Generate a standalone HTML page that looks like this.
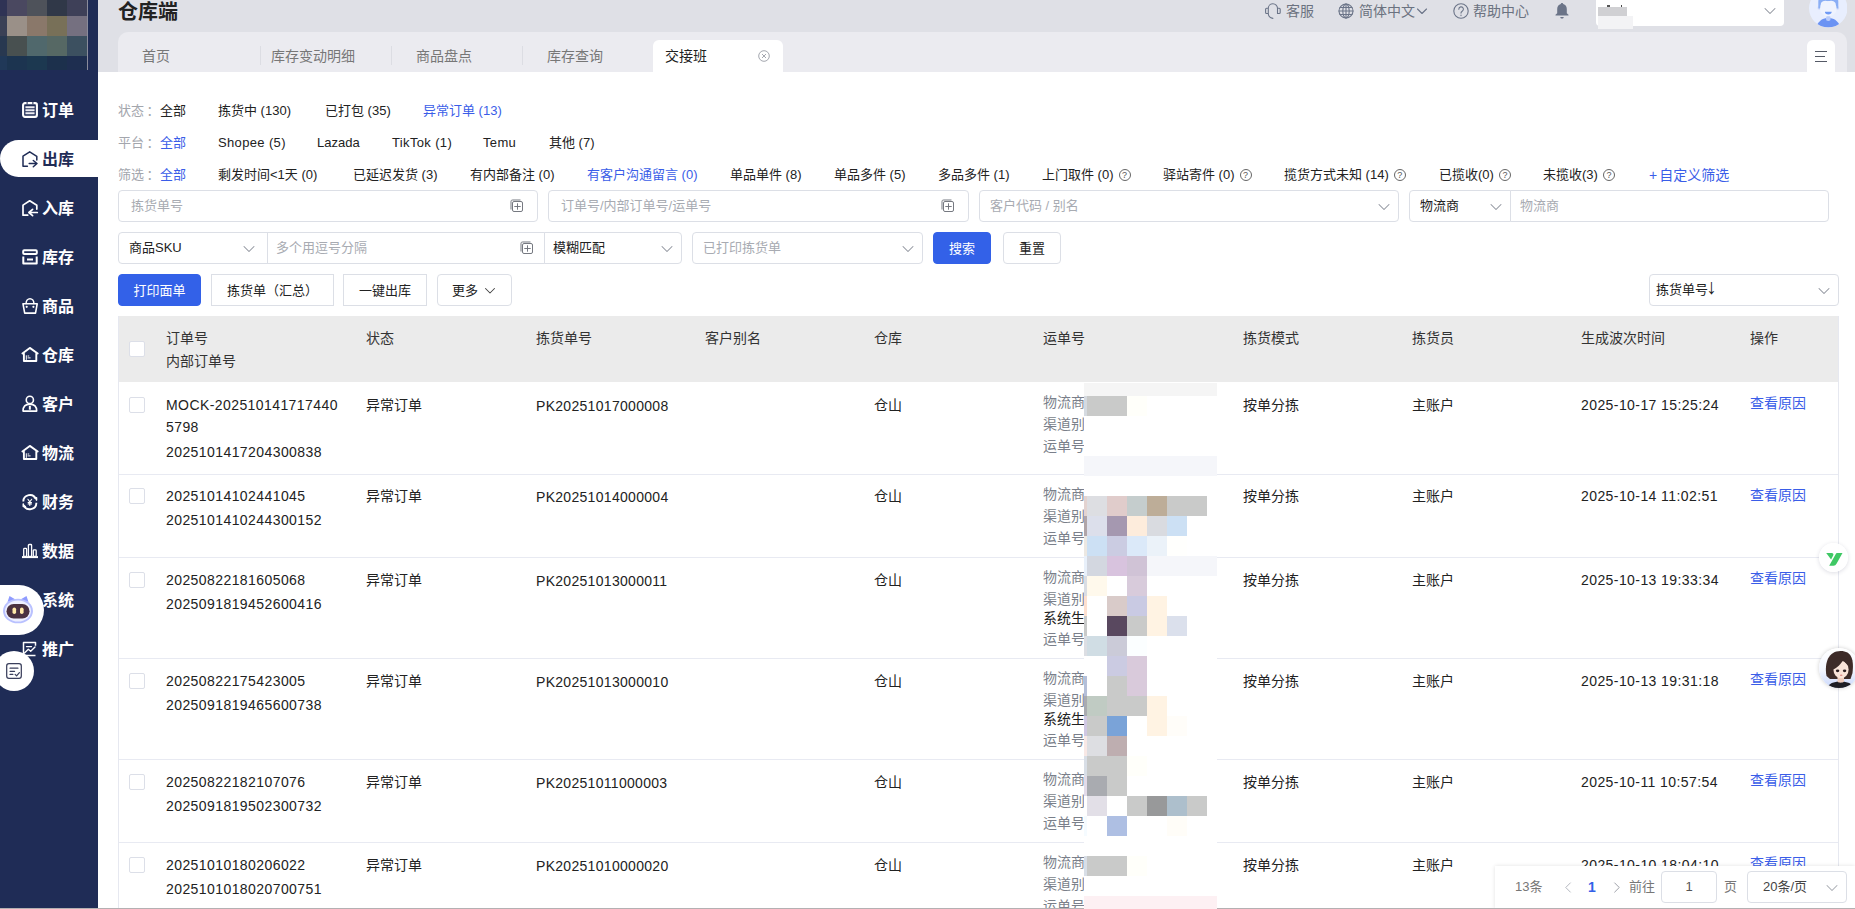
<!DOCTYPE html>
<html lang="zh-CN">
<head>
<meta charset="utf-8">
<title>仓库端 - 交接班</title>
<style>
*{box-sizing:border-box;margin:0;padding:0}
html,body{width:1855px;height:909px;overflow:hidden;background:#fff}
body{font-family:"Liberation Sans","Noto Sans CJK SC",sans-serif;font-size:14px;color:#222;position:relative}
i{font-style:normal;display:block;position:absolute}
/* sidebar */
#side{position:absolute;left:0;top:0;width:98px;height:908px;background:#1f2c56}
#logo{position:absolute;left:0;top:0;width:88px;height:70px;overflow:hidden;border-right:1px solid #8a8c9c}
#logo i{width:20px;height:20px}
.nav{position:absolute;left:0;width:98px;height:37px;color:#fff;font-weight:bold;font-size:16px;line-height:37px}
.nav svg{position:absolute;left:21.7px;top:10.8px;width:16px;height:16px;overflow:visible;fill:none;stroke:#fff;stroke-width:1.7;stroke-linecap:round;stroke-linejoin:round}
.nav span{position:absolute;left:42px;top:1px;white-space:nowrap}
.nav.on{background:#fff;color:#1f2c56;border-radius:19px 0 0 19px}
.nav.on svg{stroke:#1f2c56;stroke-width:1.5}
#bot{position:absolute;left:0;top:585px;width:44px;height:50px;background:#fff;border-radius:0 25px 25px 0}
#note{position:absolute;left:-6px;top:651px;width:40px;height:40px;background:#fff;border-radius:50%}
/* header */
#head{position:absolute;left:98px;top:0;width:1757px;height:72px;background:#dfe0e6}
#title{position:absolute;left:20px;top:-3px;font-size:20px;font-weight:bold;color:#222;line-height:30px;white-space:nowrap}
.hitem{position:absolute;top:0;height:24px;line-height:23px;color:#6b7280;font-size:14px;white-space:nowrap}
svg.hic{position:absolute;width:16px;height:16px;fill:none;stroke:#6b7488;stroke-width:1.1;stroke-linecap:round;stroke-linejoin:round}
#acct{position:absolute;left:1498px;top:-4px;width:188px;height:30px;background:#fff;border-radius:4px}
#tabs{position:absolute;left:20px;top:32px;width:1729px;height:40px;background:#ebebf0;border-radius:10px 10px 0 0}
.tab{position:absolute;top:14px;height:20px;line-height:20px;color:#777;font-size:14px;white-space:nowrap}
.sep{position:absolute;top:14px;width:1px;height:19px;background:#dcdde3}
#tabon{position:absolute;left:535px;top:8px;width:130px;height:32px;background:#fff;border-radius:6px 6px 0 0}
#menu{position:absolute;left:1689px;top:8px;width:28px;height:32px;background:#fff;border-radius:6px 6px 0 0}
/* filters */
.frow{position:absolute;left:118px;height:20px;line-height:20px;font-size:13px;white-space:nowrap}
.frow span{position:absolute;top:0;white-space:nowrap}
.lbl{color:#a3a6ad}
.ls{letter-spacing:.35px}
.blue{color:#3a5de8}
.q{display:inline-block;width:12px;height:12px;border:1px solid #666;border-radius:50%;font-size:9px;line-height:10px;text-align:center;vertical-align:1px;margin-left:5px;color:#555;font-weight:normal}
/* inputs */
.inp{position:absolute;height:32px;border:1px solid #dcdfe6;border-radius:4px;background:#fff;font-size:13px;line-height:30px;color:#a8abb2;white-space:nowrap}
.inp .t{position:absolute;left:12px;top:0}
.inp .dark{color:#222}
.btn{position:absolute;height:32px;border:1px solid #dcdfe6;border-radius:4px;background:#fff;font-size:13px;line-height:32px;color:#222;text-align:center;white-space:nowrap}
.btn.pri{background:#3361e8;border-color:#3361e8;color:#fff}
svg.chev{position:absolute;width:12px;height:12px;fill:none;stroke:#8f939d;stroke-width:1.05;stroke-linecap:round;stroke-linejoin:round}
svg.plus{position:absolute;width:14px;height:14px;fill:none;stroke:#6f727a;stroke-width:.95}
/* table */
#tbl{position:absolute;left:118px;top:316px;width:1721px;height:593px;overflow:hidden}
#tbl:before{content:'';position:absolute;left:0;top:0;z-index:2;width:1px;height:593px;background:#e6e8f0}
#tbl:after{content:'';position:absolute;left:1720px;top:0;width:1px;height:593px;background:#e6e8f0}
#th{position:absolute;left:0;top:0;width:1720px;height:66px;background:#ebebeb;color:#333}
.tr{position:absolute;left:0;width:1720px;border-bottom:1px solid #e8eaf2}
.c{position:absolute;white-space:nowrap;line-height:20px;height:20px;font-size:14px}
.c.n{letter-spacing:.42px}
.c.g{color:#7a7f8a}
.cb{width:16px;height:16px;border:1px solid #dcdfe8;border-radius:2px;background:#fff}
#mos{position:absolute;left:0;top:0;z-index:3}
#mos i{}
#yq{position:absolute;left:1818.5px;top:543.3px;width:29px;height:29px;border-radius:50%;background:rgba(255,255,255,.93);box-shadow:0 1px 4px rgba(40,40,80,.16)}
#girl{position:absolute;left:1819px;top:647.5px;width:40px;height:40px;border-radius:50%;box-shadow:0 0 4px rgba(0,0,0,.2)}
#pg{position:absolute;left:1495px;top:866px;width:360px;height:43px;background:#fff;box-shadow:0 0 4px rgba(0,0,0,.12)}
#pg .pt{position:absolute;top:11px;line-height:20px;white-space:nowrap}
#bl{position:absolute;left:0;top:908px;width:1855px;height:1px;background:#b4b0b2;z-index:2}
</style>
</head>
<body>
<div id="side"><div id="logo"><i style="left:-13px;top:-4px;background:#2f3355"></i><i style="left:7px;top:-4px;background:#4a4860"></i><i style="left:27px;top:-4px;background:#4e525a"></i><i style="left:47px;top:-4px;background:#303848"></i><i style="left:67px;top:-4px;background:#3e4058"></i><i style="left:-13px;top:16px;background:#3a4055"></i><i style="left:7px;top:16px;background:#9a9088"></i><i style="left:27px;top:16px;background:#8a786a"></i><i style="left:47px;top:16px;background:#787058"></i><i style="left:67px;top:16px;background:#757080"></i><i style="left:-13px;top:36px;background:#283850"></i><i style="left:7px;top:36px;background:#485050"></i><i style="left:27px;top:36px;background:#50686c"></i><i style="left:47px;top:36px;background:#566864"></i><i style="left:67px;top:36px;background:#3c5060"></i><i style="left:-13px;top:56px;background:#203858"></i><i style="left:7px;top:56px;background:#1c3450"></i><i style="left:27px;top:56px;background:#1c3850"></i><i style="left:47px;top:56px;background:#1c304c"></i><i style="left:67px;top:56px;background:#1e2e50"></i></div>
<div class="nav" style="top:91.0px"><svg viewBox="0 0 16 16"><rect x="1.1" y="1.1" width="13.8" height="13.8" rx="1.8" stroke-width="2.1"/><path d="M3.4 5.3h9.200M3.4 8.3h9.200M3.4 11.3h9.2" stroke-width="1.9" stroke-linecap="butt" stroke="#ececf2"/><path d="M5.1 0v2.300M10.9 0v2.3" stroke="#1f2c56" stroke-width="1" stroke-linecap="butt"/></svg><span>订单</span></div>
<div class="nav on" style="top:140.0px"><svg viewBox="0 0 16 16"><path d="M5.4 15.2H1V5.1L7.7.8l7.1 4.500v3.8"/><path d="M7.2 12.500h7.600M11.3 9.500l3.7 3-3.7 3.2"/></svg><span>出库</span></div>
<div class="nav" style="top:189.0px"><svg viewBox="0 0 16 16"><path d="M5.7 15.200H1V5.100L7.7.8l7.1 4.500v3.8"/><path d="M15.3 12.500H7.400M10.6 9.300l-3.7 3.2 3.7 3.2"/></svg><span>入库</span></div>
<div class="nav" style="top:238.0px"><svg viewBox="0 0 16 16"><rect x="1.2" y="1.3" width="13.6" height="3.7" rx="1" stroke-width="2"/><path d="M1.3 7.600v7h13.400v-7" stroke-width="2" stroke-linecap="butt"/><path d="M5 10.500h6" stroke-width="2" stroke-linecap="butt"/></svg><span>库存</span></div>
<div class="nav" style="top:287.0px"><svg viewBox="0 0 16 16"><path d="M1 5.800h14.200l-1.7 9.300H2.700z" stroke-width="1.6"/><path d="M4.1 5.500a3.8 4.7 0 0 1 7.8 0" stroke-width="1.5"/><circle cx="4.7" cy="8.8" r="1.1" fill="#fff" stroke="none"/><circle cx="11.4" cy="8.8" r="1.1" fill="#fff" stroke="none"/></svg><span>商品</span></div>
<div class="nav" style="top:336.0px"><svg viewBox="0 0 16 16"><path d="M.4 6.400L7.8.9l7.9 5.6" stroke-width="1.9"/><path d="M1.9 6.800v7.200h12.400V6.8" stroke-width="1.9"/><path d="M4.3 8.700v3.800M6 9h.8M6 10.900h2.2" stroke-width="1"/></svg><span>仓库</span></div>
<div class="nav" style="top:385.0px"><svg viewBox="0 0 16 16"><circle cx="7.850" cy="3.9" r="3.6" stroke-width="1.6"/><path d="M1 15.100c0-4.8 2.8-7 6.850-7s6.850 2.2 6.850 7z" stroke-width="1.6"/><path d="M7.850 9.700v4" stroke-width="2" stroke-linecap="butt"/></svg><span>客户</span></div>
<div class="nav" style="top:434.0px"><svg viewBox="0 0 16 16"><path d="M.4 6.400L7.8.9l7.9 5.6" stroke-width="1.9"/><path d="M1.9 6.800v7.200h12.400V6.8" stroke-width="1.9"/><path d="M4.3 8.700v3.800M6 9h.8M6 10.900h2.2" stroke-width="1"/></svg><span>物流</span></div>
<div class="nav" style="top:483.0px"><svg viewBox="0 0 16 16"><path d="M1.3 7.500A6.6 6.6 0 0 1 14 5.100M14.4 8.700A6.6 6.6 0 0 1 1.7 11.1" stroke-width="1.9" stroke-linecap="butt"/><path d="M12.4 3.700h2.100v2.400M3.4 12.500H1.300v-2.4" stroke-width="1.6"/><path d="M5.9 5.300l1.9 2.6 1.9-2.600M7.8 7.900v3.600M6.1 8.600h3.400M6.1 10h3.4" stroke-width="1.1"/></svg><span>财务</span></div>
<div class="nav" style="top:532.0px"><svg viewBox="0 0 16 16"><path d="M0 14.100h16" stroke-width="2" stroke-linecap="butt"/><rect x="1.7" y="5.4" width="2.9" height="8" rx=".8" stroke-width="1.3"/><rect x="6.4" y="1.5" width="3.2" height="12" rx=".8" stroke-width="1.3"/><rect x="11.3" y="6.9" width="2.9" height="6.5" rx=".8" stroke-width="1.3"/></svg><span>数据</span></div>
<div class="nav" style="top:581.0px"><svg viewBox="0 0 16 16"><circle cx="8" cy="8" r="2.4"/></svg><span>系统</span></div>
<div class="nav" style="top:630.0px"><svg viewBox="0 0 16 16"><path d="M13.5 14.600H1.500V1.500h12v3.3" stroke-width="1.5" stroke-linecap="butt"/><path d="M4.5 5.600h5M2.5 12l3.8-3.8 2.4 2 4.3-4.2" stroke-width="1.4"/></svg><span>推广</span></div>
</div>
<div id="bot"><svg viewBox="0 0 32 30" width="32" height="30" style="position:absolute;left:2px;top:10px">
<path d="M5.5 7l2-6 6 3.500zM26.5 7l-2-6-6 3.500z" fill="#8f9bff"/><ellipse cx="16" cy="16" rx="15" ry="12.3" fill="#b9c1ff"/><ellipse cx="16" cy="16" rx="13" ry="10.5" fill="#eef0ff"/>
<rect x="4.5" y="9" width="23" height="14.5" rx="7.2" fill="#4a3140"/><rect x="10.5" y="12.5" width="3.6" height="6.5" rx="1.8" fill="#ffe9a8"/><rect x="18" y="12.5" width="3.6" height="6.5" rx="1.8" fill="#ffe9a8"/></svg></div>
<div id="note"><svg viewBox="0 0 16 16" width="18" height="18" style="position:absolute;left:11px;top:11px;fill:none;stroke:#3a3f5c;stroke-width:1.1;stroke-linecap:round;stroke-linejoin:round"><rect x="1.5" y="1.5" width="13" height="13" rx="2"/><path d="M4.5 5.500h7M4.5 8.300h4M4.5 11h2.500M9 11l1.3 1.3 2.5-2.8"/></svg></div>
<div id="head"><div id="title">仓库端</div>
<svg class="hic" style="left:1167px;top:3px" viewBox="0 0 16 16"><path d="M3.3 10.500V5.300a4.6 4.6 0 0 1 9.2 0v5.200M3.3 5.200H1.600a1 1 0 0 0-1 1v3.300a1 1 0 0 0 1 1h1.700M12.5 5.200h1.700a1 1 0 0 1 1 1v3.300a1 1 0 0 1-1 1h-1.700M3.3 10.500c0 2.6 1.8 4.3 4.6 4.9"/></svg><div class="hitem" style="left:1188px">客服</div><svg class="hic" style="left:1240px;top:3px" viewBox="0 0 16 16" stroke-width="0.9"><circle cx="8" cy="8" r="7"/><ellipse cx="8" cy="8" rx="3.2" ry="7"/><path d="M8 1v14M1 8h14M2 4.500h12M2 11.500h12"/></svg><div class="hitem" style="left:1261px">简体中文</div><svg class="hic" style="left:1318px;top:5px;width:12px;height:12px" viewBox="0 0 12 12"><path d="M1.5 4l4.5 4.500L10.5 4"/></svg><svg class="hic" style="left:1355px;top:3px" viewBox="0 0 16 16"><circle cx="8" cy="8" r="7.2"/><path d="M5.8 6.200a2.3 2.3 0 1 1 3.4 2c-.8.5-1.2 1-1.2 1.900M8 12v.6"/></svg><div class="hitem" style="left:1375px">帮助中心</div><svg style="position:absolute;left:1456px;top:2px;width:16px;height:18px" viewBox="0 0 16 18"><path d="M8 1c.7 0 1.2.5 1.2 1.1 2.3.6 3.6 2.5 3.6 4.900v4.200l1.7 1.600v.8H1.500v-.8l1.7-1.600V7c0-2.4 1.3-4.3 3.6-4.900C6.8 1.5 7.3 1 8 1zM6.3 15h3.400c0 .9-.8 1.6-1.7 1.600S6.3 15.9 6.3 15z" fill="#6b7488"/></svg><div id="acct"><svg class="chev" style="left:168px;top:9px" viewBox="0 0 12 12"><path d="M1 3.500l5 5 5-5"/></svg></div><i style="left:1500px;top:7px;width:29px;height:9px;background:#d0d0d3"></i><i style="left:1500px;top:16px;width:35px;height:13px;background:#f3f3f5"></i><i style="left:1509px;top:5px;width:3px;height:2px;background:#555"></i><i style="left:1523px;top:5px;width:1px;height:2px;background:#444"></i><svg style="position:absolute;left:1710.7px;top:-10.600px;width:38.500px;height:38.500px" viewBox="0 0 38.5 38.5"><defs><clipPath id="avc"><circle cx="19.250" cy="19.250" r="19.250"/></clipPath></defs><circle cx="19.250" cy="19.250" r="19.250" fill="#e8eefe"/><g clip-path="url(#avc)"><path d="M8 36.200c2-4.6 6-7.2 11.3-7.200s9.3 2.6 11.3 7.200c-3 1.6-7 2.4-11.3 2.400S11 37.8 8 36.200z" fill="#6b93f3"/><rect x="17" y="27" width="4.6" height="5" rx="2" fill="#b9cbfa"/><circle cx="10.3" cy="19" r="1.9" fill="#d5e0fc"/><circle cx="28.3" cy="19" r="1.9" fill="#d5e0fc"/><path d="M9.3 19.500V13c0-6 4-9.5 10-9.500s10 3.5 10 9.500v6.500z" fill="#8aaef5"/><ellipse cx="19.3" cy="19.7" rx="8.3" ry="7.6" fill="#eff3fe"/><path d="M12 14c2-2.5 5-3 7-1.2 2.5-1.8 5.5-1.3 7.5 1.200l.5 3h-15.500z" fill="#eff3fe"/><path d="M15.9 22.800h6.800c0 1.8-1.5 2.8-3.4 2.800s-3.4-1-3.4-2.800z" fill="#6f9af5"/></g></svg><div id="tabs"><div class="sep" style="left:142.0px"></div><div class="sep" style="left:273.0px"></div><div class="sep" style="left:404.0px"></div><div id="tabon"></div><div class="tab" style="left:24px;">首页</div><div class="tab" style="left:153px;">库存变动明细</div><div class="tab" style="left:298px;">商品盘点</div><div class="tab" style="left:429px;">库存查询</div><div class="tab" style="left:547px;color:#222">交接班</div><svg style="position:absolute;left:640px;top:18px;width:12px;height:12px;fill:none;stroke:#9a9da6;stroke-width:0.9" viewBox="0 0 12 12"><circle cx="6" cy="6" r="5.3"/><path d="M4 4l4 4M8 4l-4 4"/></svg><div id="menu"><svg viewBox="0 0 12 12" style="position:absolute;left:8px;top:10px;width:12px;height:13px;fill:none;stroke:#555a66;stroke-width:1"><path d="M0 1h12M0 6h10M0 11h12"/></svg></div></div></div>
<div class="frow" style="top:101px"><span class="lbl" style="left:0">状态<b style="margin-left:2.5px;font-weight:400">：</b></span><span class="" style="left:42px">全部</span><span class="" style="left:100px">拣货中 (130)</span><span class="" style="left:207px">已打包 (35)</span><span class="blue" style="left:305px">异常订单 (13)</span></div>
<div class="frow" style="top:133px"><span class="lbl" style="left:0">平台<b style="margin-left:2.5px;font-weight:400">：</b></span><span class="blue" style="left:42px">全部</span><span class="ls" style="left:100px">Shopee (5)</span><span class="" style="left:199px">Lazada</span><span class="ls" style="left:274px">TikTok (1)</span><span class="ls" style="left:365px">Temu</span><span class="" style="left:431px">其他 (7)</span></div>
<div class="frow" style="top:165px"><span class="lbl" style="left:0">筛选<b style="margin-left:2.5px;font-weight:400">：</b></span><span class="blue" style="left:42px">全部</span><span class="" style="left:100px">剩发时间&lt;1天 (0)</span><span class="" style="left:235px">已延迟发货 (3)</span><span class="" style="left:352px">有内部备注 (0)</span><span class="blue" style="left:469px">有客户沟通留言 (0)</span><span class="" style="left:612px">单品单件 (8)</span><span class="" style="left:716px">单品多件 (5)</span><span class="" style="left:820px">多品多件 (1)</span><span class="" style="left:924px">上门取件 (0)<b class="q">?</b></span><span class="" style="left:1045px">驿站寄件 (0)<b class="q">?</b></span><span class="" style="left:1166px">揽货方式未知 (14)<b class="q">?</b></span><span class="" style="left:1321px">已揽收(0)<b class="q">?</b></span><span class="" style="left:1425px">未揽收(3)<b class="q">?</b></span><span class="blue" style="font-size:14px;top:-.5px;left:1530px"><b style="font-weight:normal;margin-right:2px;margin-left:1px">+</b>自定义筛选</span></div>
<div class="inp" style="left:118px;top:190px;width:420px;"><span class="t" style="left:12px">拣货单号</span><svg class="plus" style="right:13px;top:8px" viewBox="0 0 14 14"><rect x="2.5" y="2.5" width="10" height="10" rx="1.5"/><path d="M1 10.500V2.500C1 1.5 1.5 1 2.5 1h8M7.5 4.300v6.400M4.3 7.500h6.4"/></svg></div>
<div class="inp" style="left:548px;top:190px;width:421px;"><span class="t" style="left:12px">订单号/内部订单号/运单号</span><svg class="plus" style="right:13px;top:8px" viewBox="0 0 14 14"><rect x="2.5" y="2.5" width="10" height="10" rx="1.5"/><path d="M1 10.500V2.500C1 1.5 1.5 1 2.5 1h8M7.5 4.300v6.400M4.3 7.500h6.4"/></svg></div>
<div class="inp" style="left:979px;top:190px;width:420px;"><span class="t" style="left:10px">客户代码 / 别名</span><svg class="chev" style="right:8px;top:10px" viewBox="0 0 12 12"><path d="M1 3.500l5 5 5-5"/></svg></div>
<div class="inp" style="left:1409px;top:190px;width:102px;border-radius:4px 0 0 4px"><span class="t dark" style="left:10px">物流商</span><svg class="chev" style="right:8px;top:10px" viewBox="0 0 12 12"><path d="M1 3.500l5 5 5-5"/></svg></div>
<div class="inp" style="left:1510px;top:190px;width:319px;border-radius:0 4px 4px 0"><span class="t" style="left:9px">物流商</span></div>
<div class="inp" style="left:118px;top:232px;width:150px;border-radius:4px 0 0 4px"><span class="t dark" style="left:10px">商品SKU</span><svg class="chev" style="right:12px;top:10px" viewBox="0 0 12 12"><path d="M1 3.500l5 5 5-5"/></svg></div>
<div class="inp" style="left:267px;top:232px;width:278px;border-radius:0"><span class="t" style="left:8px">多个用逗号分隔</span><svg class="plus" style="right:10px;top:8px" viewBox="0 0 14 14"><rect x="2.5" y="2.5" width="10" height="10" rx="1.5"/><path d="M1 10.500V2.500C1 1.5 1.5 1 2.5 1h8M7.5 4.300v6.400M4.3 7.500h6.4"/></svg></div>
<div class="inp" style="left:544px;top:232px;width:138px;border-radius:0 4px 4px 0"><span class="t dark" style="left:8px">模糊匹配</span><svg class="chev" style="right:8px;top:10px" viewBox="0 0 12 12"><path d="M1 3.500l5 5 5-5"/></svg></div>
<div class="inp" style="left:692px;top:232px;width:231px;"><span class="t" style="left:10px">已打印拣货单</span><svg class="chev" style="right:8px;top:10px" viewBox="0 0 12 12"><path d="M1 3.500l5 5 5-5"/></svg></div>
<div class="btn pri" style="left:933px;top:232px;width:58px">搜索</div><div class="btn" style="left:1003px;top:232px;width:58px">重置</div>
<div class="btn pri" style="left:118px;top:274px;width:83px">打印面单</div><div class="btn" style="left:211px;top:274px;width:123px;border-radius:0">拣货单（汇总）</div><div class="btn" style="left:343px;top:274px;width:84px;border-radius:0">一键出库</div><div class="btn" style="left:437px;top:274px;width:75px;text-align:left;padding-left:14px">更多<svg class="chev" style="left:46px;top:10px;stroke:#444" viewBox="0 0 12 12"><path d="M1.5 3.500l4.5 4.5 4.5-4.5"/></svg></div>
<div class="inp" style="left:1649px;top:274px;width:190px;"><span class="t dark" style="left:6px">拣货单号<b style="font-weight:400;font-size:21px;line-height:0;margin-left:-2px;position:relative;top:0px">↓</b></span><svg class="chev" style="right:8px;top:10px" viewBox="0 0 12 12"><path d="M1 3.500l5 5 5-5"/></svg></div>
<div id="tbl"><div id="th"><i class="cb" style="left:11px;top:25px"></i><span class="c" style="left:48px;top:12px">订单号</span><span class="c" style="left:248px;top:12px">状态</span><span class="c" style="left:418px;top:12px">拣货单号</span><span class="c" style="left:587px;top:12px">客户别名</span><span class="c" style="left:756px;top:12px">仓库</span><span class="c" style="left:925px;top:12px">运单号</span><span class="c" style="left:1125px;top:12px">拣货模式</span><span class="c" style="left:1294px;top:12px">拣货员</span><span class="c" style="left:1463px;top:12px">生成波次时间</span><span class="c" style="left:1632px;top:12px">操作</span><span class="c" style="left:48px;top:35px">内部订单号</span></div>
<div class="tr" style="top:66px;height:93px"><i class="cb" style="left:11px;top:15.0px"></i><span class="c n" style="left:48px;top:13.0px">MOCK-202510141717440</span><span class="c n" style="left:48px;top:35.0px">5798</span><span class="c n" style="left:48px;top:60.0px">2025101417204300838</span><span class="c" style="left:248px;top:13.0px">异常订单</span><span class="c n" style="left:418px;top:14.0px;letter-spacing:.3px">PK20251017000008</span><span class="c" style="left:756px;top:13.0px">仓山</span><span class="c g" style="left:925px;top:10.0px">物流商</span><span class="c g" style="left:925px;top:32.0px">渠道别</span><span class="c g" style="left:925px;top:54.0px">运单号</span><span class="c" style="left:1125px;top:13.0px">按单分拣</span><span class="c" style="left:1294px;top:13.0px">主账户</span><span class="c n" style="left:1463px;top:13.0px">2025-10-17 15:25:24</span><span class="c blue" style="left:1632px;top:11px">查看原因</span></div>
<div class="tr" style="top:159px;height:83px"><i class="cb" style="left:11px;top:13.0px"></i><span class="c n" style="left:48px;top:11.0px">20251014102441045</span><span class="c n" style="left:48px;top:35.0px">2025101410244300152</span><span class="c" style="left:248px;top:11.0px">异常订单</span><span class="c n" style="left:418px;top:12.0px;letter-spacing:.3px">PK20251014000004</span><span class="c" style="left:756px;top:11.0px">仓山</span><span class="c g" style="left:925px;top:9.0px">物流商</span><span class="c g" style="left:925px;top:31.0px">渠道别</span><span class="c g" style="left:925px;top:53.0px">运单号</span><span class="c" style="left:1125px;top:11.0px">按单分拣</span><span class="c" style="left:1294px;top:11.0px">主账户</span><span class="c n" style="left:1463px;top:11.0px">2025-10-14 11:02:51</span><span class="c blue" style="left:1632px;top:10px">查看原因</span></div>
<div class="tr" style="top:242px;height:101px"><i class="cb" style="left:11px;top:13.5px"></i><span class="c n" style="left:48px;top:11.5px">20250822181605068</span><span class="c n" style="left:48px;top:36.0px">2025091819452600416</span><span class="c" style="left:248px;top:11.5px">异常订单</span><span class="c n" style="left:418px;top:12.5px;letter-spacing:.3px">PK20251013000011</span><span class="c" style="left:756px;top:11.5px">仓山</span><span class="c g" style="left:925px;top:9.0px">物流商</span><span class="c g" style="left:925px;top:31.0px">渠道别</span><span class="c " style="left:925px;top:49.5px">系统生</span><span class="c g" style="left:925px;top:71.0px">运单号</span><span class="c" style="left:1125px;top:11.5px">按单分拣</span><span class="c" style="left:1294px;top:11.5px">主账户</span><span class="c n" style="left:1463px;top:11.5px">2025-10-13 19:33:34</span><span class="c blue" style="left:1632px;top:10px">查看原因</span></div>
<div class="tr" style="top:343px;height:101px"><i class="cb" style="left:11px;top:13.5px"></i><span class="c n" style="left:48px;top:11.5px">20250822175423005</span><span class="c n" style="left:48px;top:35.5px">2025091819465600738</span><span class="c" style="left:248px;top:11.5px">异常订单</span><span class="c n" style="left:418px;top:12.5px;letter-spacing:.3px">PK20251013000010</span><span class="c" style="left:756px;top:11.5px">仓山</span><span class="c g" style="left:925px;top:9.0px">物流商</span><span class="c g" style="left:925px;top:31.0px">渠道别</span><span class="c " style="left:925px;top:49.5px">系统生</span><span class="c g" style="left:925px;top:71.0px">运单号</span><span class="c" style="left:1125px;top:11.5px">按单分拣</span><span class="c" style="left:1294px;top:11.5px">主账户</span><span class="c n" style="left:1463px;top:11.5px">2025-10-13 19:31:18</span><span class="c blue" style="left:1632px;top:10px">查看原因</span></div>
<div class="tr" style="top:444px;height:83px"><i class="cb" style="left:11px;top:13.5px"></i><span class="c n" style="left:48px;top:11.5px">20250822182107076</span><span class="c n" style="left:48px;top:35.5px">2025091819502300732</span><span class="c" style="left:248px;top:11.5px">异常订单</span><span class="c n" style="left:418px;top:12.5px;letter-spacing:.3px">PK20251011000003</span><span class="c" style="left:756px;top:11.5px">仓山</span><span class="c g" style="left:925px;top:9.0px">物流商</span><span class="c g" style="left:925px;top:31.0px">渠道别</span><span class="c g" style="left:925px;top:53.0px">运单号</span><span class="c" style="left:1125px;top:11.5px">按单分拣</span><span class="c" style="left:1294px;top:11.5px">主账户</span><span class="c n" style="left:1463px;top:11.5px">2025-10-11 10:57:54</span><span class="c blue" style="left:1632px;top:10px">查看原因</span></div>
<div class="tr" style="top:527px;height:83px"><i class="cb" style="left:11px;top:13.5px"></i><span class="c n" style="left:48px;top:11.5px">20251010180206022</span><span class="c n" style="left:48px;top:35.5px">2025101018020700751</span><span class="c" style="left:248px;top:11.5px">异常订单</span><span class="c n" style="left:418px;top:12.5px;letter-spacing:.3px">PK20251010000020</span><span class="c" style="left:756px;top:11.5px">仓山</span><span class="c g" style="left:925px;top:9.0px">物流商</span><span class="c g" style="left:925px;top:31.0px">渠道别</span><span class="c g" style="left:925px;top:53.0px">运单号</span><span class="c" style="left:1125px;top:11.5px">按单分拣</span><span class="c" style="left:1294px;top:11.5px">主账户</span><span class="c n" style="left:1463px;top:11.5px">2025-10-10 18:04:10</span><span class="c blue" style="left:1632px;top:10px">查看原因</span></div>
</div>
<div id="mos"><i style="left:1084px;top:382.7px;width:133px;height:526.3px;background:#ffffff"></i><i style="left:1084px;top:382.7px;width:133px;height:13px;background:#f5f5f5"></i><i style="left:1084px;top:455.8px;width:133px;height:20px;background:#f5f6fa"></i><i style="left:1084px;top:895.8px;width:133px;height:13.2px;background:#fdf0f3"></i><i style="left:1084px;top:395.7px;width:3px;height:20px;background:#d5dae0"></i><i style="left:1087px;top:395.7px;width:40px;height:20px;background:#c9cac9"></i><i style="left:1127px;top:395.7px;width:20px;height:20px;background:#fffffa"></i><i style="left:1084px;top:495.7px;width:3px;height:20px;background:#e3d3d0"></i><i style="left:1087px;top:495.7px;width:20px;height:20px;background:#dddee2"></i><i style="left:1107px;top:495.7px;width:20px;height:20px;background:#e0cccb"></i><i style="left:1127px;top:495.7px;width:20px;height:20px;background:#c5cdcd"></i><i style="left:1147px;top:495.7px;width:20px;height:20px;background:#bdad98"></i><i style="left:1167px;top:495.7px;width:40px;height:20px;background:#c9cac9"></i><i style="left:1084px;top:515.7px;width:3px;height:20px;background:#b0a5a8"></i><i style="left:1087px;top:515.7px;width:20px;height:20px;background:#dcdfeb"></i><i style="left:1107px;top:515.7px;width:20px;height:20px;background:#a598b0"></i><i style="left:1127px;top:515.7px;width:20px;height:20px;background:#fdecdc"></i><i style="left:1147px;top:515.7px;width:20px;height:20px;background:#d9dbe0"></i><i style="left:1167px;top:515.7px;width:20px;height:20px;background:#cce0f4"></i><i style="left:1084px;top:535.7px;width:3px;height:20px;background:#ece8e2"></i><i style="left:1087px;top:535.7px;width:20px;height:20px;background:#cce0f4"></i><i style="left:1107px;top:535.7px;width:20px;height:20px;background:#cbcce2"></i><i style="left:1127px;top:535.7px;width:20px;height:20px;background:#dbe9f9"></i><i style="left:1147px;top:535.7px;width:20px;height:20px;background:#ebf2f9"></i><i style="left:1167px;top:535.7px;width:20px;height:20px;background:#fffffd"></i><i style="left:1084px;top:555.7px;width:3px;height:20px;background:#e8f0fa"></i><i style="left:1087px;top:555.7px;width:20px;height:20px;background:#d3d7e0"></i><i style="left:1107px;top:555.7px;width:20px;height:20px;background:#d8c3de"></i><i style="left:1127px;top:555.7px;width:20px;height:20px;background:#d0c3d6"></i><i style="left:1147px;top:555.7px;width:70px;height:20px;background:#f5f6fa"></i><i style="left:1084px;top:575.7px;width:3px;height:20px;background:#dadde3"></i><i style="left:1087px;top:575.7px;width:20px;height:20px;background:#fff9ec"></i><i style="left:1127px;top:575.7px;width:20px;height:20px;background:#d8cbdb"></i><i style="left:1084px;top:595.7px;width:3px;height:20px;background:#fde0d0"></i><i style="left:1107px;top:595.7px;width:20px;height:20px;background:#d9cbc9"></i><i style="left:1127px;top:595.7px;width:20px;height:20px;background:#c9cae3"></i><i style="left:1147px;top:595.7px;width:20px;height:20px;background:#fff3e3"></i><i style="left:1084px;top:615.7px;width:3px;height:20px;background:#c9cac9"></i><i style="left:1107px;top:615.7px;width:20px;height:20px;background:#59485f"></i><i style="left:1127px;top:615.7px;width:20px;height:20px;background:#c9cac9"></i><i style="left:1147px;top:615.7px;width:20px;height:20px;background:#fff3e3"></i><i style="left:1167px;top:615.7px;width:20px;height:20px;background:#dbe0ec"></i><i style="left:1084px;top:635.7px;width:3px;height:20px;background:#dcdee3"></i><i style="left:1087px;top:635.7px;width:20px;height:20px;background:#d0dde4"></i><i style="left:1107px;top:635.7px;width:20px;height:20px;background:#cbcbd8"></i><i style="left:1127px;top:635.7px;width:20px;height:20px;background:#fbfeff"></i><i style="left:1107px;top:655.7px;width:20px;height:20px;background:#cbcbe2"></i><i style="left:1127px;top:655.7px;width:20px;height:20px;background:#d9cadb"></i><i style="left:1084px;top:675.7px;width:3px;height:20px;background:#b5bfd8"></i><i style="left:1107px;top:675.7px;width:20px;height:20px;background:#c9cac9"></i><i style="left:1127px;top:675.7px;width:20px;height:20px;background:#d9cadb"></i><i style="left:1084px;top:695.7px;width:3px;height:20px;background:#a9abb0"></i><i style="left:1087px;top:695.7px;width:20px;height:20px;background:#c0cbc3"></i><i style="left:1107px;top:695.7px;width:40px;height:20px;background:#c9cac9"></i><i style="left:1147px;top:695.7px;width:20px;height:20px;background:#fff3e3"></i><i style="left:1084px;top:715.7px;width:3px;height:20px;background:#d0c8e3"></i><i style="left:1087px;top:715.7px;width:20px;height:20px;background:#c9cac9"></i><i style="left:1107px;top:715.7px;width:20px;height:20px;background:#7aa3d8"></i><i style="left:1147px;top:715.7px;width:20px;height:20px;background:#fff3e3"></i><i style="left:1167px;top:715.7px;width:20px;height:20px;background:#fffdf9"></i><i style="left:1084px;top:735.7px;width:3px;height:20px;background:#f8e8e5"></i><i style="left:1087px;top:735.7px;width:20px;height:20px;background:#dddee2"></i><i style="left:1107px;top:735.7px;width:20px;height:20px;background:#beaeb0"></i><i style="left:1084px;top:755.7px;width:3px;height:20px;background:#d8dee6"></i><i style="left:1087px;top:755.7px;width:40px;height:20px;background:#c9cac9"></i><i style="left:1127px;top:755.7px;width:20px;height:20px;background:#fffffa"></i><i style="left:1084px;top:775.7px;width:3px;height:20px;background:#e3dbe8"></i><i style="left:1087px;top:775.7px;width:20px;height:20px;background:#a9abb0"></i><i style="left:1107px;top:775.7px;width:20px;height:20px;background:#c9cac9"></i><i style="left:1087px;top:795.7px;width:20px;height:20px;background:#e2dfe7"></i><i style="left:1127px;top:795.7px;width:20px;height:20px;background:#c9cac9"></i><i style="left:1147px;top:795.7px;width:20px;height:20px;background:#98999a"></i><i style="left:1167px;top:795.7px;width:20px;height:20px;background:#adbfcc"></i><i style="left:1187px;top:795.7px;width:20px;height:20px;background:#c9cac9"></i><i style="left:1084px;top:815.7px;width:3px;height:20px;background:#f5fbff"></i><i style="left:1107px;top:815.7px;width:20px;height:20px;background:#aebfe3"></i><i style="left:1167px;top:815.7px;width:20px;height:20px;background:#fffdf8"></i><i style="left:1084px;top:855.7px;width:3px;height:20px;background:#d8dee6"></i><i style="left:1087px;top:855.7px;width:40px;height:20px;background:#c9cac9"></i><i style="left:1127px;top:855.7px;width:20px;height:20px;background:#fffffa"></i></div>
<div id="yq"><svg viewBox="0 0 29 29" width="29" height="29" style="position:absolute;left:0;top:0"><path d="M7.2 10h5.500c1.4 0 2.1 1 1.6 2.200l-2.2 4.300zM18.6 10h4.900l-6 10.800c-.7 1.3-1.6 1.9-3 1.900h-4.300l6.3-11.300c.5-.9 1.1-1.4 2.1-1.400z" fill="#3fc864"/></svg></div>
<div id="girl"><svg viewBox="0 0 40 40" width="40" height="40"><defs><clipPath id="gc"><circle cx="20" cy="20" r="20"/></clipPath><linearGradient id="gg" x1="0" y1="0" x2="0" y2="1"><stop offset="0" stop-color="#ffffff"/><stop offset=".55" stop-color="#f3f6ff"/><stop offset="1" stop-color="#c9d7fb"/></linearGradient></defs><circle cx="20" cy="20" r="20" fill="url(#gg)"/><g clip-path="url(#gc)"><path d="M7.5 28C5 14 10 3 21.5 3S35 12 33.5 25l-2 6H11z" fill="#3d2b28"/><path d="M8 43c0-6.5 5-9.5 13.5-9.500S35 36.5 35 43z" fill="#1e1e24"/><path d="M18.5 28h6.500v5.500c-1 1.6-5.5 1.6-6.5 0z" fill="#f0cdbd"/><ellipse cx="22" cy="21.5" rx="7.6" ry="8.7" fill="#f9e3d8"/><path d="M13 22c-.5-8.5 3-13 9-13 5.5 0 8.5 3.5 9 9.5-3-1.5-5.2-4-6.7-7C22.3 16 18 20 13 22z" fill="#3d2b28"/><ellipse cx="18.6" cy="22.8" rx="1.7" ry="1.4" fill="#2a1d20"/><ellipse cx="25.6" cy="22.8" rx="1.7" ry="1.4" fill="#2a1d20"/><ellipse cx="22.2" cy="27.3" rx="1.3" ry=".8" fill="#d98a86"/></g></svg></div>
<div id="pg"><span class="pt" style="left:20px;color:#777;font-size:13px">13条</span>
<svg class="chev" style="left:68px;top:16px;width:11px;height:11px;stroke:#b0b3bb" viewBox="0 0 12 12"><path d="M8 1L3 6l5 5"/></svg>
<span class="pt" style="left:93px;color:#3361e8;font-weight:bold;font-size:14px">1</span>
<svg class="chev" style="left:116px;top:16px;width:11px;height:11px;stroke:#9a9da6" viewBox="0 0 12 12"><path d="M4 1l5 5-5 5"/></svg>
<span class="pt" style="left:134px;color:#777;font-size:13px">前往</span>
<div class="inp" style="left:166px;top:5px;width:56px;height:32px;text-align:center;color:#555;line-height:30px">1</div>
<span class="pt" style="left:229px;color:#777;font-size:13px">页</span>
<div class="inp" style="left:252px;top:5px;width:100px;height:32px"><span class="t dark" style="left:15px;color:#444">20条/页</span><svg class="chev" style="right:8px;top:10px;stroke:#a8abb2" viewBox="0 0 12 12"><path d="M1 3.500l5 5 5-5"/></svg></div>
</div>
<div id="bl"></div>
</body>
</html>
